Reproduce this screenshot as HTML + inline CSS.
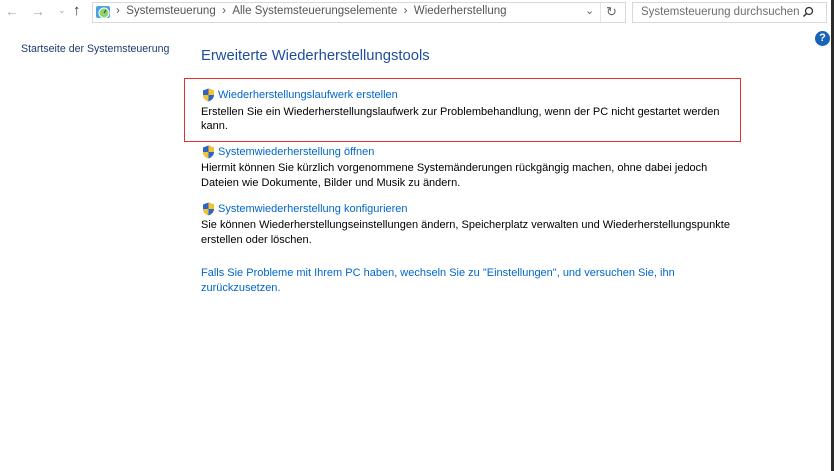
<!DOCTYPE html>
<html><head><meta charset="utf-8"><style>
body{margin:0;width:834px;height:471px;background:#fff;position:relative;overflow:hidden;font-family:"Liberation Sans",sans-serif;font-size:11px;color:#000}
.a{position:absolute;white-space:nowrap}
.l{color:#0066cc}
.sh{position:absolute;width:13px;height:14px}
</style></head><body>
<div class="a" style="left:5px;top:3px;color:#aaa;font-size:14px">&#8592;</div>
<div class="a" style="left:31px;top:3px;color:#aaa;font-size:14px">&#8594;</div>
<div class="a" style="left:58px;top:5px;color:#aaa;font-size:9px">&#8964;</div>
<div class="a" style="left:73px;top:2px;color:#333;font-size:15px">&#8593;</div>
<div style="position:absolute;left:92px;top:2px;width:532px;height:19px;border:1px solid #d9d9d9"></div>
<div style="position:absolute;left:600px;top:3px;width:1px;height:19px;background:#e5e5e5"></div>
<svg style="position:absolute;left:95px;top:4px" width="16" height="16"><rect x="1" y="2" width="14" height="12" rx="2" fill="#4aa3df"/><circle cx="9" cy="9" r="5" fill="#8fd16b" stroke="#fff"/><path d="M9 9l2-3" stroke="#333"/></svg>
<div class="a" style="left:116px;top:5px;color:#555;font-size:11.5px">›&nbsp;&nbsp;Systemsteuerung&nbsp;&nbsp;›&nbsp;&nbsp;Alle Systemsteuerungselemente&nbsp;&nbsp;›&nbsp;&nbsp;Wiederherstellung</div>
<div class="a" style="left:585px;top:4px;color:#666;font-size:11px">&#8964;</div>
<div class="a" style="left:606px;top:4px;color:#666;font-size:13px">&#8635;</div>
<div style="position:absolute;left:632px;top:2px;width:193px;height:19px;border:1px solid #d9d9d9"></div>
<div class="a" style="left:641px;top:6px;color:#6d6d6d;font-size:11.5px">Systemsteuerung durchsuchen</div>
<svg style="position:absolute;left:802px;top:6px" width="12" height="12"><circle cx="7" cy="5" r="3.5" fill="none" stroke="#333" stroke-width="1.3"/><path d="M4.5 7.5L1.5 10.5" stroke="#333" stroke-width="1.5"/></svg>
<div style="position:absolute;left:815px;top:31px;width:15px;height:15px;border-radius:50%;background:#1a64b8;color:#fff;font-weight:bold;font-size:11px;text-align:center;line-height:15px">?</div>
<div style="position:absolute;left:831px;top:0;width:3px;height:471px;background:#2b2b2b"></div>
<div class="a" style="left:21px;top:43px;color:#1e3b6e;font-size:10.6px">Startseite der Systemsteuerung</div>
<div class="a" style="left:201px;top:48px;font-size:14.8px;color:#1e4e9a">Erweiterte Wiederherstellungstools</div>
<div style="position:absolute;left:184px;top:78px;width:555px;height:62px;border:1px solid #e03030"></div>
<svg class="sh" style="left:202px;top:88px" viewBox="0 0 13 14"><path d="M6.5 0.5L12 2.5V7c0 3-2.5 5.5-5.5 6.5C3.5 12.5 1 10 1 7V2.5z" fill="#2b63c6"/><path d="M6.5 0.5L12 2.5V7H6.5zM6.5 7H1c0 3 2.5 5.5 5.5 6.5z" fill="#f4c430"/></svg>
<div class="a l" style="left:218px;top:89px">Wiederherstellungslaufwerk erstellen</div>
<div class="a" style="left:201px;top:105px;line-height:14px">Erstellen Sie ein Wiederherstellungslaufwerk zur Problembehandlung, wenn der PC nicht gestartet werden<br>kann.</div>
<svg class="sh" style="left:202px;top:145px" viewBox="0 0 13 14"><path d="M6.5 0.5L12 2.5V7c0 3-2.5 5.5-5.5 6.5C3.5 12.5 1 10 1 7V2.5z" fill="#2b63c6"/><path d="M6.5 0.5L12 2.5V7H6.5zM6.5 7H1c0 3 2.5 5.5 5.5 6.5z" fill="#f4c430"/></svg>
<div class="a l" style="left:218px;top:146px">Systemwiederherstellung öffnen</div>
<div class="a" style="left:201px;top:161px;line-height:14.5px">Hiermit können Sie kürzlich vorgenommene Systemänderungen rückgängig machen, ohne dabei jedoch<br>Dateien wie Dokumente, Bilder und Musik zu ändern.</div>
<svg class="sh" style="left:202px;top:202px" viewBox="0 0 13 14"><path d="M6.5 0.5L12 2.5V7c0 3-2.5 5.5-5.5 6.5C3.5 12.5 1 10 1 7V2.5z" fill="#2b63c6"/><path d="M6.5 0.5L12 2.5V7H6.5zM6.5 7H1c0 3 2.5 5.5 5.5 6.5z" fill="#f4c430"/></svg>
<div class="a l" style="left:218px;top:203px">Systemwiederherstellung konfigurieren</div>
<div class="a" style="left:201px;top:218px;line-height:14.5px">Sie können Wiederherstellungseinstellungen ändern, Speicherplatz verwalten und Wiederherstellungspunkte<br>erstellen oder löschen.</div>
<div class="a l" style="left:201px;top:266px;line-height:15px">Falls Sie Probleme mit Ihrem PC haben, wechseln Sie zu "Einstellungen", und versuchen Sie, ihn<br>zurückzusetzen.</div>
</body></html>
